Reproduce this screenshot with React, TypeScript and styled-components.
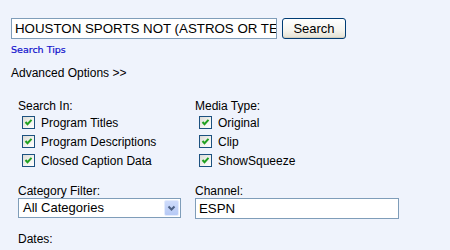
import React from "react";
import styled, { createGlobalStyle } from "styled-components";

const Global = createGlobalStyle`
  html, body { margin: 0; padding: 0; background: #eff3fc; }
  body { font-family: "Liberation Sans", Arial, sans-serif; color: #000; }
`;

const Page = styled.div`
  padding: 18px 0 0 11px;
  width: 450px;
  height: 250px;
  box-sizing: border-box;
  overflow: hidden;
`;

const SearchRow = styled.div`
  display: flex;
  align-items: center;
  gap: 5px;
  height: 21px;
`;

const TextBox = styled.div<{ $w: number }>`
  width: ${(p) => p.$w}px;
  height: 21px;
  box-sizing: border-box;
  border: 1px solid #7f9db9;
  background: #fff;
  padding: 0 0 0 3px;
  font-size: 13.3px;
  line-height: 19px;
  white-space: nowrap;
  overflow: hidden;
`;

const Button = styled.div`
  width: 64px;
  height: 21px;
  box-sizing: border-box;
  border: 1px solid #003c74;
  border-radius: 3px;
  background: linear-gradient(#ffffff 0%, #f5f4ee 60%, #e3e0d2 100%);
  box-shadow: inset 0 -1px 0 #d6d0c0;
  font-size: 13px;
  line-height: 19px;
  text-align: center;
`;

const TipsLink = styled.div`
  margin-top: 5px;
  font-family: "DejaVu Sans", Verdana, sans-serif;
  font-size: 9.5px;
  line-height: 12px;
  color: #1010cc;
  -webkit-text-stroke: 0.2px #1010cc;
`;

const Advanced = styled.div`
  margin-top: 10px;
  font-size: 12px;
  line-height: 14px;
`;

const Form = styled.div`
  margin: 19px 0 0 7px;
`;

const Columns = styled.div<{ $top?: number }>`
  display: grid;
  grid-template-columns: 177px 1fr;
  margin-top: ${(p) => p.$top ?? 0}px;
`;

const Label = styled.div`
  font-size: 12px;
  line-height: 14px;
`;

const CheckRow = styled.div`
  display: flex;
  align-items: center;
  height: 19px;
  padding-left: 4px;
  gap: 6px;
  font-size: 12px;
`;

const Box = styled.span`
  width: 13px;
  height: 13px;
  box-sizing: border-box;
  border: 1px solid #1c5180;
  background: linear-gradient(135deg, #dcdcd7 0%, #f4f4f0 60%, #ffffff 100%);
  display: flex;
  align-items: center;
  justify-content: center;
`;

const Select = styled.div`
  width: 163px;
  height: 20px;
  box-sizing: border-box;
  border: 1px solid #7f9db9;
  background: #fff;
  display: flex;
  align-items: stretch;
  font-size: 13px;
`;

const SelectText = styled.div`
  flex: 1;
  padding-left: 4px;
  line-height: 18px;
`;

const Arrow = styled.div`
  width: 15px;
  margin: 1px;
  border-radius: 2px;
  background: linear-gradient(#cfdcfb, #b6c9f5);
  border: 1px solid #e4ecfd;
  box-sizing: border-box;
  display: flex;
  align-items: center;
  justify-content: center;
`;

const Dates = styled(Label)`
  margin-top: 13px;
`;

const Check = ({ label }: { label: string }) => (
  <CheckRow>
    <Box>
      <svg width="9" height="9" viewBox="0 0 9 9">
        <path d="M1.5 4 L3.5 6.2 L7.5 1.8" fill="none" stroke="#21a121" strokeWidth="2" />
      </svg>
    </Box>
    <span>{label}</span>
  </CheckRow>
);

export default function App() {
  return (
    <Page>
      <Global />
      <SearchRow>
        <TextBox $w={266}>HOUSTON SPORTS NOT (ASTROS OR TEXANS)</TextBox>
        <Button>Search</Button>
      </SearchRow>
      <TipsLink>Search Tips</TipsLink>
      <Advanced>Advanced Options &gt;&gt;</Advanced>
      <Form>
        <Columns>
          <div>
            <Label>Search In:</Label>
            <Check label="Program Titles" />
            <Check label="Program Descriptions" />
            <Check label="Closed Caption Data" />
          </div>
          <div>
            <Label>Media Type:</Label>
            <Check label="Original" />
            <Check label="Clip" />
            <Check label="ShowSqueeze" />
          </div>
        </Columns>
        <Columns $top={14}>
          <div>
            <Label>Category Filter:</Label>
            <Select>
              <SelectText>All Categories</SelectText>
              <Arrow>
                <svg width="9" height="7" viewBox="0 0 9 7">
                  <path d="M1.5 1.5 L4.5 4.5 L7.5 1.5" fill="none" stroke="#4d6185" strokeWidth="2" />
                </svg>
              </Arrow>
            </Select>
          </div>
          <div>
            <Label>Channel:</Label>
            <TextBox $w={204}>ESPN</TextBox>
          </div>
        </Columns>
        <Dates>Dates:</Dates>
      </Form>
    </Page>
  );
}
